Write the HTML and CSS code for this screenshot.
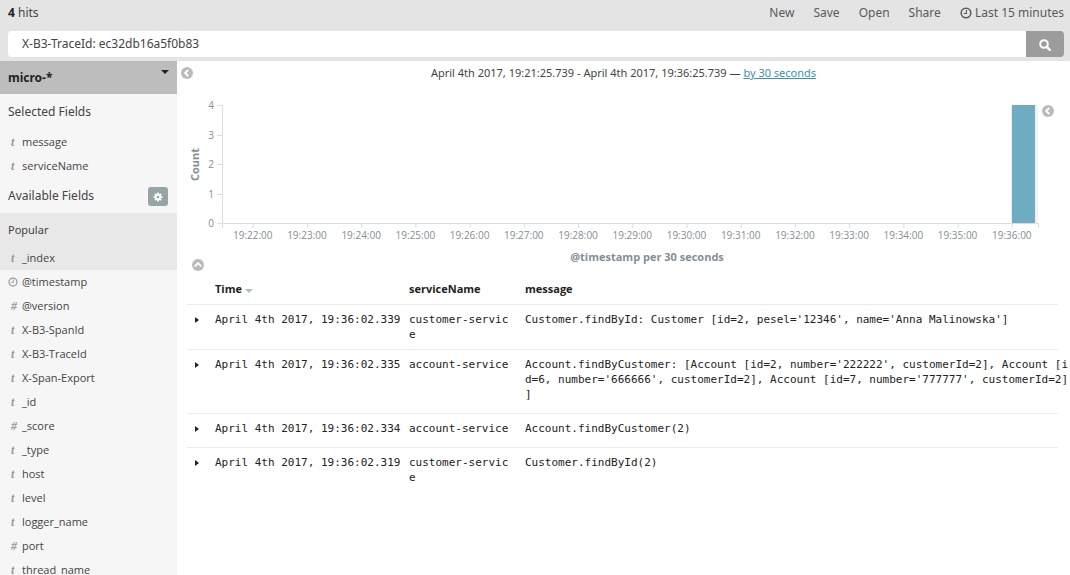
FILE: index.html
```html
<!DOCTYPE html>
<html lang="en">
<head>
    <meta charset="UTF-8">
    <meta name="viewport" content="width=device-width, initial-scale=1.0">
    <title>Discover - Kibana</title>
    <link rel="stylesheet" href="styles.css">
</head>
<body>

<svg class="sprite" aria-hidden="true">
    <symbol id="clock" viewBox="0 0 12 12">
        <circle cx="6" cy="6" r="4.8" fill="none" stroke="currentColor" stroke-width="1.5"/>
        <path d="M6.4 3v3.5H3.8" fill="none" stroke="currentColor" stroke-width="1.1"/>
    </symbol>
    <symbol id="chevron" viewBox="0 0 12 12">
        <circle cx="6" cy="6" r="6" fill="currentColor"/>
        <path d="M7.3 2.8L4.1 6l3.2 3.2" fill="none" stroke="#fff" stroke-width="1.9"/>
    </symbol>
    <symbol id="search" viewBox="0 0 12 12">
        <circle cx="5" cy="5" r="3.8" fill="none" stroke="currentColor" stroke-width="2"/>
        <path d="M7.8 7.8l3 3" stroke="currentColor" stroke-width="2.4" stroke-linecap="round"/>
    </symbol>
    <symbol id="gear" viewBox="0 0 12 12">
        <circle cx="6" cy="6" r="2.9" fill="none" stroke="currentColor" stroke-width="2.6"/>
        <path d="M6 .6v2M6 9.4v2M.6 6h2M9.4 6h2M2.2 2.2l1.4 1.4M8.4 8.4l1.4 1.4M9.8 2.2L8.4 3.6M3.6 8.4L2.2 9.8" stroke="currentColor" stroke-width="2"/>
    </symbol>
</svg>

<div class="app">
    <header class="header">
        <div class="topbar">
            <div class="hits"><strong>4</strong> hits</div>
            <nav class="menu">
                <a href="#">New</a>
                <a href="#">Save</a>
                <a href="#">Open</a>
                <a href="#">Share</a>
                <a href="#"><svg class="icon"><use href="#clock"/></svg> Last 15 minutes</a>
            </nav>
        </div>
        <form class="search">
            <input type="text" aria-label="Search" value="X-B3-TraceId: ec32db16a5f0b83">
            <button type="button" aria-label="Search"><svg class="icon"><use href="#search"/></svg></button>
        </form>
    </header>

    <div class="content">
        <aside class="sidebar">
            <button type="button" class="index-pattern">micro-*<span class="caret"></span></button>
            <h2>Selected Fields</h2>
            <ul class="fields">
                <li><i>t</i>message</li>
                <li><i>t</i>serviceName</li>
            </ul>
            <div class="available">
                <h2>Available Fields</h2>
                <button type="button" class="settings" aria-label="Field settings"><svg class="icon"><use href="#gear"/></svg></button>
            </div>
            <div class="popular">
                <h3>Popular</h3>
                <ul class="fields">
                    <li><i>t</i>_index</li>
                </ul>
            </div>
            <ul class="fields">
                <li><i><svg class="icon"><use href="#clock"/></svg></i>@timestamp</li>
                <li><i>#</i>@version</li>
                <li><i>t</i>X-B3-SpanId</li>
                <li><i>t</i>X-B3-TraceId</li>
                <li><i>t</i>X-Span-Export</li>
                <li><i>t</i>_id</li>
                <li><i>#</i>_score</li>
                <li><i>t</i>_type</li>
                <li><i>t</i>host</li>
                <li><i>t</i>level</li>
                <li><i>t</i>logger_name</li>
                <li><i>#</i>port</li>
                <li><i>t</i>thread_name</li>
            </ul>
        </aside>

        <main class="main">
            <div class="range">
                <button type="button" class="toggle" aria-label="Collapse sidebar"><svg class="icon"><use href="#chevron"/></svg></button>
                <p>April 4th 2017, 19:21:25.739 - April 4th 2017, 19:36:25.739 — <a href="#">by 30 seconds</a></p>
            </div>

            <div class="chart">
                <div class="y-title">Count</div>
                <svg class="plot" id="plot"></svg>
                <button type="button" class="toggle" aria-label="Show legend"><svg class="icon"><use href="#chevron"/></svg></button>
            </div>
            <div class="chart-footer">
                <button type="button" class="toggle up" aria-label="Collapse chart"><svg class="icon"><use href="#chevron"/></svg></button>
                <div class="x-title">@timestamp per 30 seconds</div>
            </div>

            <table class="docs">
                <colgroup>
                    <col class="col-open">
                    <col class="col-time">
                    <col class="col-service">
                    <col>
                </colgroup>
                <thead>
                    <tr><th></th><th>Time <span class="sort"></span></th><th>serviceName</th><th>message</th></tr>
                </thead>
                <tbody>
                    <tr>
                        <td><span class="open"></span></td>
                        <td>April 4th 2017, 19:36:02.339</td>
                        <td>customer-servic<br>e</td>
                        <td>Customer.findById: Customer [id=2, pesel='12346', name='Anna Malinowska']</td>
                    </tr>
                    <tr>
                        <td><span class="open"></span></td>
                        <td>April 4th 2017, 19:36:02.335</td>
                        <td>account-service</td>
                        <td>Account.findByCustomer: [Account [id=2, number='222222', customerId=2], Account [i<br>d=6, number='666666', customerId=2], Account [id=7, number='777777', customerId=2]<br>]</td>
                    </tr>
                    <tr>
                        <td><span class="open"></span></td>
                        <td>April 4th 2017, 19:36:02.334</td>
                        <td>account-service</td>
                        <td>Account.findByCustomer(2)</td>
                    </tr>
                    <tr>
                        <td><span class="open"></span></td>
                        <td>April 4th 2017, 19:36:02.319</td>
                        <td>customer-servic<br>e</td>
                        <td>Customer.findById(2)</td>
                    </tr>
                </tbody>
            </table>
        </main>
    </div>
</div>

<script>
    const HEIGHT = 118;
    const RANGE = 903; // seconds shown on the x axis
    const plot = document.getElementById('plot');
    let shapes = '';

    // y axis
    for (let n = 0; n <= 4; n++) {
        const y = Math.round(HEIGHT - n * HEIGHT / 4);
        shapes += `<rect class="axis" x="-5" y="${y}" width="5" height="1"/>`;
        shapes += `<text x="-8" y="${y + 4}" text-anchor="end">${n}</text>`;
    }
    shapes += `<rect class="axis" x="0" y="0" width="1" height="${HEIGHT + 5}"/>`;

    // x axis, one label per minute
    for (let m = 0; m < 15; m++) {
        const x = (34 + m * 60) / RANGE * 100;
        shapes += `<rect class="axis" x="${x}%" y="${HEIGHT}" width="1" height="5"/>`;
        shapes += `<text x="${x}%" y="${HEIGHT + 16}" text-anchor="middle">19:${22 + m}:00</text>`;
    }

    // the only bucket with hits
    shapes += `<rect class="rest" x="99.5%" y="0" width="0.5%" height="${HEIGHT}"/>`;
    shapes += `<rect class="bar" x="${(34 + 14 * 60) / RANGE * 100}%" y="0" width="2.85%" height="${HEIGHT}"/>`;
    shapes += `<rect class="axis" x="0" y="${HEIGHT}" width="100%" height="1"/>`;
    shapes += `<rect class="axis" x="100%" y="${HEIGHT}" width="1" height="5"/>`;
    plot.innerHTML = shapes;
</script>

</body>
</html>
```
FILE: styles.css
```css
* {
    box-sizing: border-box;
}
body {
    margin: 0;
    font-family: "Noto Sans", "Open Sans", sans-serif;
    font-size: 12px;
    line-height: 18px;
    color: #444;
    background-color: #fff;
}
button {
    padding: 0;
    border: none;
    font-family: inherit;
    cursor: pointer;
}
h2, h3, p, ul {
    margin: 0;
    padding: 0;
    font-weight: normal;
}
.sprite {
    display: none;
}
.icon {
    width: 12px;
    height: 12px;
}
.app {
    display: flex;
    flex-direction: column;
    height: 100vh;
    overflow: hidden;
}

/* header */
.header {
    padding: 4px 6px 4px 8px;
    background-color: #e4e4e4;
}
.topbar {
    display: flex;
    justify-content: space-between;
    height: 27px;
}
.hits strong {
    color: #222;
}
.menu {
    display: flex;
    gap: 19px;
}
.menu a {
    color: #5a5a5a;
    text-decoration: none;
}
.menu .icon {
    vertical-align: -2px;
}
.search {
    display: flex;
    height: 26px;
}
.search input {
    flex: 1;
    min-width: 0;
    padding: 0 14px;
    border: none;
    border-radius: 4px 0 0 4px;
    font: inherit;
    color: #444;
}
.search button {
    width: 38px;
    border-radius: 0 4px 4px 0;
    color: #fff;
    background-color: #9c9c9c;
}
.search .icon {
    vertical-align: middle;
}
.content {
    display: flex;
    flex: 1;
    min-height: 0;
}

/* sidebar */
.sidebar {
    flex: none;
    width: 177px;
    overflow: hidden;
    background-color: #f6f6f6;
}
.sidebar h2 {
    padding: 0 8px;
    font-size: 12px;
    line-height: 36px;
}
.index-pattern {
    display: flex;
    justify-content: space-between;
    width: 100%;
    height: 33px;
    padding: 0 8px;
    font-size: 12px;
    font-weight: bold;
    line-height: 33px;
    color: #222;
    background-color: #bdbdbd;
}
.caret {
    margin-top: 9px;
    border: 4px solid transparent;
    border-top-color: #222;
    height: 0;
}
.fields {
    list-style: none;
    font-family: "Open Sans", "Noto Sans", sans-serif;
    font-size: 11px;
    line-height: 24px;
}
.fields li {
    display: flex;
    padding-left: 8px;
}
.fields i {
    width: 14px;
    padding-left: 3px;
    font-family: "Liberation Serif", serif;
    font-size: 12px;
    font-weight: bold;
    color: #999;
}
.fields .icon {
    display: block;
    width: 10px;
    height: 10px;
    margin: 7px 0 0 -3px;
}
.available {
    display: flex;
    justify-content: space-between;
    height: 35px;
    padding-right: 9px;
}
.settings {
    width: 20px;
    height: 19px;
    margin-top: 9px;
    border-radius: 3px;
    color: #fff;
    background-color: #95a5a6;
}
.settings .icon {
    display: block;
    width: 10px;
    height: 10px;
    margin: auto;
}
.popular {
    background-color: #e8e8e8;
}
.popular h3 {
    padding: 0 8px;
    font-size: 11px;
    line-height: 33px;
}

/* histogram */
.main {
    flex: 1;
    min-width: 0;
}
.toggle {
    flex: none;
    display: block;
    width: 12px;
    height: 12px;
    color: #bbb;
    background: none;
}
.toggle .icon {
    display: block;
}
.range {
    display: flex;
    align-items: center;
    padding: 0 16px 0 4px;
    height: 24px;
    font-size: 11px;
}
.range p {
    flex: 1;
    text-align: center;
}
.range a {
    color: #3a93ae;
}
.chart {
    display: flex;
    padding: 20px 16px 0 9px;
}
.y-title {
    width: 18px;
    height: 119px;
    writing-mode: vertical-rl;
    transform: rotate(180deg);
    text-align: center;
    font-family: "Open Sans", "Noto Sans", sans-serif;
    font-size: 11px;
    font-weight: bold;
    color: #848e96;
}
.plot {
    flex: 1;
    min-width: 0;
    height: 143px;
    margin: 0 4px 0 18px;
    overflow: visible;
}
.plot text {
    font-family: "Open Sans", "Noto Sans", sans-serif;
    font-size: 10px;
    fill: #848e96;
}
.axis {
    fill: #ddd;
}
.bar {
    fill: #6eadc1;
}
.rest {
    fill: #f3f3f3;
}
.chart-footer {
    display: flex;
    height: 23px;
    padding-left: 15px;
}
.x-title {
    flex: 1;
    padding-left: 20px;
    text-align: center;
    font-family: "Open Sans", "Noto Sans", sans-serif;
    font-size: 11px;
    font-weight: bold;
    color: #848e96;
}
.up {
    align-self: flex-end;
    transform: rotate(90deg);
}

/* documents */
.docs {
    width: calc(100% - 22px);
    margin: 0 12px 0 10px;
    table-layout: fixed;
    border-collapse: collapse;
}
.col-open {
    width: 20px;
}
.col-time {
    width: 194px;
}
.col-service {
    width: 116px;
}
.docs th {
    height: 33px;
    padding: 4px 8px 0;
    text-align: left;
    font-family: "Open Sans", "Noto Sans", sans-serif;
    font-size: 11px;
    color: #222;
}
.docs td {
    padding: 7px 0 11px 8px;
    border-top: 1px solid #e8eded;
    vertical-align: top;
    white-space: nowrap;
    font-family: "DejaVu Sans Mono", monospace;
    font-size: 11px;
    line-height: 15px;
    color: #222;
}
.docs tbody tr:first-child td {
    padding-bottom: 7px;
}
.sort {
    display: inline-block;
    border: 4px solid transparent;
    border-top-color: #b4bcc2;
    border-bottom: none;
}
.open {
    display: inline-block;
    border: 3px solid transparent;
    border-left: 4px solid #222;
    border-right: none;
}
```
